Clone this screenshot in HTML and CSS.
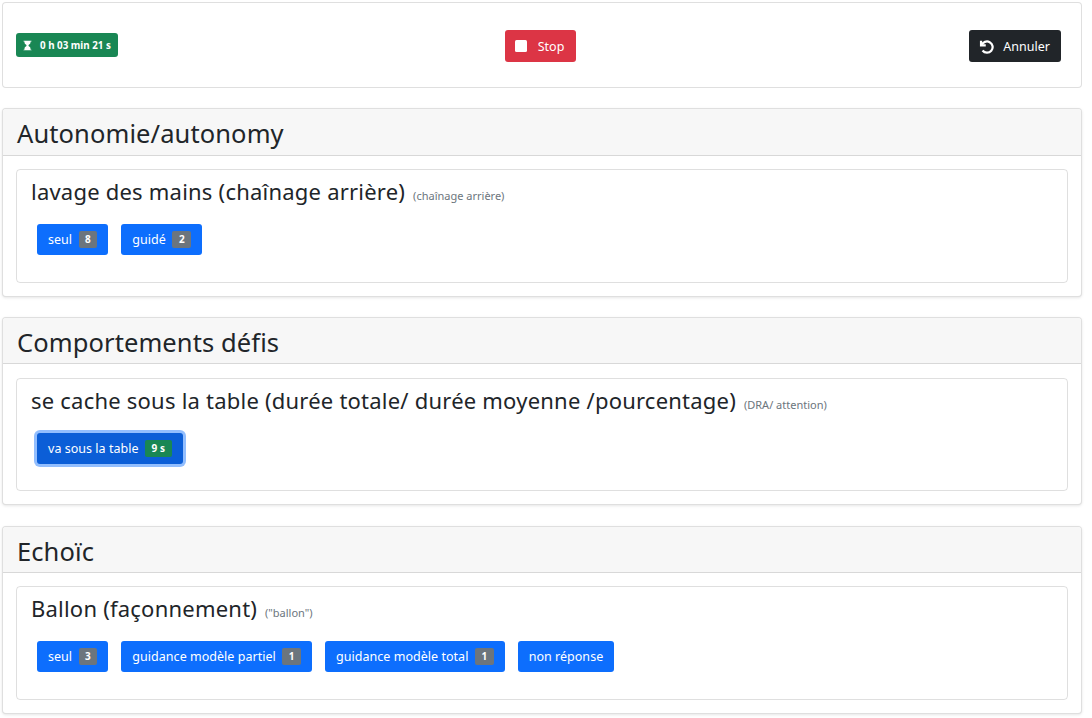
FILE: index.html
```html
<!DOCTYPE html>
<html lang="fr">
<head>
<meta charset="utf-8">
<title>Session</title>
<link rel="stylesheet" href="styles.css">
</head>
<body>
<div class="card topbar">
  <span class="timer">
    <svg class="timer-icon" viewBox="0 0 16 16"><path d="M2 1.500a.5.500 0 0 1 .5-.5h11a.5.500 0 0 1 0 1h-1v1a4.500 4.500 0 0 1-2.557 4.060c-.29.139-.443.377-.443.59v.7c0 .213.154.451.443.59A4.500 4.500 0 0 1 12.500 13v1h1a.5.500 0 0 1 0 1h-11a.5.500 0 1 1 0-1h1v-1a4.500 4.500 0 0 1 2.557-4.060c.29-.139.443-.377.443-.59v-.7c0-.213-.154-.451-.443-.59A4.500 4.500 0 0 1 3.500 3V2h-1a.5.500 0 0 1-.5-.5z"/></svg>
    0 h 03 min 21 s
  </span>
  <button class="btn btn-stop">
    <svg class="btn-icon" viewBox="0 0 12 12"><rect width="12" height="12" rx="1.500"/></svg>
    Stop
  </button>
  <button class="btn btn-cancel">
    <svg class="undo-icon" viewBox="0 0 16 16"><path d="M2.200 1.800v5h5"/><path d="M2.800 6.800A6 6 0 1 1 3.800 12.300"/></svg>
    Annuler
  </button>
</div>

<section class="card section">
  <h4 class="section-title">Autonomie/autonomy</h4>
  <div class="section-body">
    <div class="inner">
      <h5 class="behaviour">lavage des mains (chaînage arrière) <small class="note">(chaînage arrière)</small></h5>
      <div class="actions">
        <button class="btn btn-primary">seul <span class="count">8</span></button>
        <button class="btn btn-primary">guidé <span class="count">2</span></button>
      </div>
    </div>
  </div>
</section>

<section class="card section">
  <h4 class="section-title">Comportements défis</h4>
  <div class="section-body">
    <div class="inner">
      <h5 class="behaviour">se cache sous la table (durée totale/ durée moyenne /pourcentage) <small class="note">(DRA/ attention)</small></h5>
      <div class="actions">
        <button class="btn btn-primary btn-active">va sous la table <span class="count count-green">9 s</span></button>
      </div>
    </div>
  </div>
</section>

<section class="card section">
  <h4 class="section-title">Echoïc</h4>
  <div class="section-body">
    <div class="inner">
      <h5 class="behaviour">Ballon (façonnement) <small class="note">("ballon")</small></h5>
      <div class="actions">
        <button class="btn btn-primary">seul <span class="count">3</span></button>
        <button class="btn btn-primary">guidance modèle partiel <span class="count">1</span></button>
        <button class="btn btn-primary">guidance modèle total <span class="count">1</span></button>
        <button class="btn btn-primary">non réponse</button>
      </div>
    </div>
  </div>
</section>
</body>
</html>
```
FILE: styles.css
```css
* { box-sizing: border-box; }
html, body { height: 100%; }
body {
  margin: 0;
  padding: 2px 10px 0 2px;
  background: #fff;
  color: #212529;
  font-family: "Noto Sans", "Open Sans", sans-serif;
  font-size: 13px;
  overflow: hidden;
}
.card {
  background: #fff;
  border: 1px solid rgba(0,0,0,.125);
  border-radius: 4px;
}
.topbar {
  height: 86px;
  padding: 2px 20px 0 13px;
  display: flex;
  align-items: center;
  justify-content: space-between;
  margin-bottom: 20px;
}
.timer {
  display: inline-flex;
  align-items: center;
  height: 24px;
  padding: 0 7px 0 6px;
  margin-top: -2px;
  background: #198754;
  color: #fff;
  border-radius: 3px;
  font-size: 9.800px;
  font-weight: 700;
  gap: 7px;
}
.timer-icon { width: 11px; height: 11px; fill: #fff; }
.btn {
  display: inline-flex;
  align-items: center;
  height: 31px;
  padding: 0 11px;
  border: 0;
  border-radius: 3px;
  color: #fff;
  font-family: inherit;
  font-size: 12.500px;
  letter-spacing: .03px;
}
.btn-icon { width: 12px; height: 12px; fill: #fff; }
.undo-icon {
  width: 15px;
  height: 15px;
  fill: none;
  stroke: #fff;
  stroke-width: 2.400;
}
.btn-stop { height: 32px; background: #dc3545; gap: 11px; padding: 0 12px 0 10px; margin-right: 6px; }
.btn-cancel { height: 32px; background: #212529; gap: 9px; padding: 0 11px 0 10px; }
.section {
  margin-bottom: 20.200px;
  box-shadow: 0 1px 3px rgba(0,0,0,.1);
}
.section-title {
  margin: 0;
  height: 46.600px;
  padding: 0 14px;
  background: #f7f7f7;
  border-bottom: 1px solid rgba(0,0,0,.125);
  font-size: 25.500px;
  font-weight: 400;
  letter-spacing: .1px;
  line-height: 48px;
  border-radius: 3px 3px 0 0;
}
.section-body { padding: 13.200px 13px 13px; }
.inner {
  border: 1px solid rgba(0,0,0,.125);
  border-radius: 4px;
  height: 113.800px;
  padding: 7px 14px 0;
}
.behaviour {
  margin: 0 0 18px;
  font-size: 22px;
  font-weight: 400;
  letter-spacing: .22px;
  line-height: 29px;
}
.note {
  font-size: 11px;
  font-weight: 400;
  letter-spacing: 0;
  line-height: 1;
  color: #6c757d;
  margin-left: 2px;
}
.actions { display: flex; gap: 13px; padding-left: 6px; }
.count {
  display: inline-block;
  margin-left: 6.500px;
  padding: 2px 6.500px;
  background: #6c757d;
  color: #fff;
  border-radius: 2px;
  font-size: 10px;
  font-weight: 700;
  line-height: 13px;
}
.count-green { background: #198754; }
.btn-primary { background: #0d6efd; }
.btn-active {
  background: #0b5ed7;
  box-shadow: 0 0 0 3px rgba(13,110,253,.45);
}
```
